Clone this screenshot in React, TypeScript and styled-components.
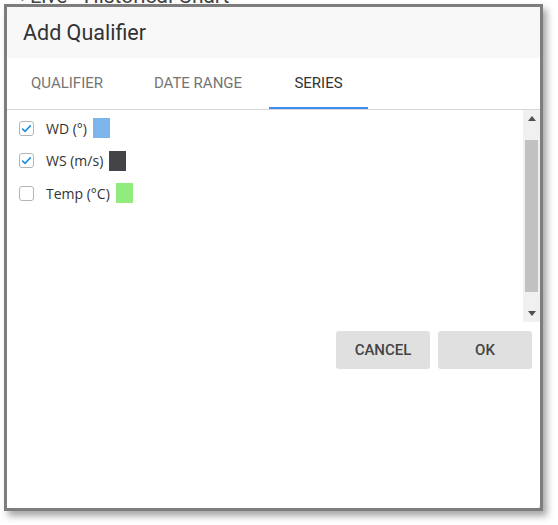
import React from "react";
import styled, { createGlobalStyle } from "styled-components";

const GlobalStyle = createGlobalStyle`
  html, body {
    margin: 0;
    padding: 0;
    background: #ffffff;
  }
`;

interface Series {
  id: string
  label: string
  color: string
  checked: boolean
}

const series: Series[] = [
  { id: "wd", label: "WD (°)", color: "#7cb5ec", checked: true },
  { id: "ws", label: "WS (m/s)", color: "#434348", checked: true },
  { id: "temp", label: "Temp (°C)", color: "#90ed7d", checked: false },
];

const tabs = [
  { id: "qualifier", label: "QUALIFIER", width: 120 },
  { id: "date", label: "DATE RANGE", width: 142 },
  { id: "series", label: "SERIES", width: 99 },
];

const App: React.FC = (): React.ReactElement => {
  return (
    <>
      <GlobalStyle />
      <Screen>
        <BehindStrip>
          <BehindText>&lt; Live - Historical Chart</BehindText>
        </BehindStrip>
        <Frame>
          <Dialog>
            <Header>Add Qualifier</Header>
            <TabBar>
              {tabs.map((tab) => (
                <Tab key={tab.id} $width={tab.width} $active={tab.id === "series"}>
                  {tab.label}
                </Tab>
              ))}
            </TabBar>
            <ListArea>
              <List>
                {series.map((item) => (
                  <Row key={item.id}>
                    <Box>
                      {item.checked && (
                        <svg width="11" height="9" viewBox="0 0 11 9">
                          <path
                            d="M1.2 4.6 L4 7.3 L9.8 1.4"
                            fill="none"
                            stroke="#1e8de6"
                            strokeWidth="1.6"
                          />
                        </svg>
                      )}
                    </Box>
                    <Label>{item.label}</Label>
                    <Swatch $color={item.color} />
                  </Row>
                ))}
              </List>
              <ScrollBar>
                <Arrow>
                  <svg width="8" height="5" viewBox="0 0 8 5">
                    <path d="M0 5 L4 0 L8 5 Z" fill="#505050" />
                  </svg>
                </Arrow>
                <Thumb />
                <Arrow>
                  <svg width="8" height="5" viewBox="0 0 8 5">
                    <path d="M0 0 L4 5 L8 0 Z" fill="#505050" />
                  </svg>
                </Arrow>
              </ScrollBar>
            </ListArea>
            <Actions>
              <ActionButton>CANCEL</ActionButton>
              <ActionButton>OK</ActionButton>
            </Actions>
          </Dialog>
        </Frame>
      </Screen>
    </>
  );
};

const Screen = styled.div`
  position: relative;
  width: 558px;
  height: 525px;
  overflow: hidden;
  background: #ffffff;
`;

const BehindStrip = styled.div`
  position: absolute;
  top: 0;
  left: 14px;
  height: 5px;
  overflow: hidden;
  z-index: 2;
`;

const BehindText = styled.div`
  margin-top: -14px;
  font-family: Roboto, "Liberation Sans", sans-serif;
  font-size: 21px;
  line-height: 21px;
  color: #444;
  white-space: nowrap;
`;

const Frame = styled.div`
  position: absolute;
  left: 4px;
  top: 4px;
  width: 533px;
  height: 501px;
  border: 3px solid #7d7d7d;
  background: #d9d9d9;
  box-shadow: 4px 5px 7px rgba(0, 0, 0, 0.35);
`;

const Dialog = styled.div`
  display: flex;
  flex-direction: column;
  width: 533px;
  height: 501px;
  background: #ffffff;
  border-radius: 0 0 4px 0;
  font-family: Roboto, "Liberation Sans", sans-serif;
`;

const Header = styled.div`
  display: flex;
  align-items: center;
  height: 51px;
  padding: 0 0 0 16px;
  background: #f8f8f8;
  color: #333;
  font-size: 21.5px;
`;

const TabBar = styled.div`
  display: flex;
  height: 51px;
  border-bottom: 1px solid #d6d6d6;
`;

const Tab = styled.div<{ $width: number; $active?: boolean }>`
  display: flex;
  align-items: center;
  justify-content: center;
  width: ${(p) => p.$width}px;
  box-sizing: border-box;
  padding-top: 1px;
  font-size: 15px;
  color: ${(p) => (p.$active ? "#333" : "#757575")};
  border-bottom: 2px solid ${(p) => (p.$active ? "#3f8ef0" : "transparent")};
`;

const ListArea = styled.div`
  display: flex;
  height: 212px;
`;

const List = styled.div`
  flex: 1;
  display: flex;
  flex-direction: column;
  padding: 2px 0 0 12px;
`;

const Row = styled.div`
  display: flex;
  align-items: center;
  height: 32.5px;
`;

const Box = styled.div`
  display: flex;
  align-items: center;
  justify-content: center;
  width: 15px;
  height: 15px;
  box-sizing: border-box;
  border: 1px solid #b4b4b4;
  border-radius: 3px;
  background: #fff;
`;

const Label = styled.span`
  margin-left: 12px;
  font-family: "Open Sans", "Noto Sans", sans-serif;
  font-size: 14px;
  color: #333;
`;

const Swatch = styled.div<{ $color: string }>`
  width: 17px;
  height: 20px;
  margin-left: 6px;
  background: ${(p) => p.$color};
`;

const ScrollBar = styled.div`
  display: flex;
  flex-direction: column;
  width: 17px;
  background: #f0f0f0;
`;

const Arrow = styled.div`
  display: flex;
  align-items: center;
  justify-content: center;
  height: 17px;
`;

const Thumb = styled.div`
  flex: 1;
  margin: 13px 2px 13px 2px;
  background: #c1c1c1;
`;

const Actions = styled.div`
  display: flex;
  justify-content: flex-end;
  gap: 8px;
  padding: 9px 8px 0 0;
`;

const ActionButton = styled.div`
  display: flex;
  align-items: center;
  justify-content: center;
  width: 94px;
  height: 38px;
  border-radius: 3px;
  background: #e0e0e0;
  color: #444;
  font-size: 15px;
  font-weight: 500;
`;

export default App;
